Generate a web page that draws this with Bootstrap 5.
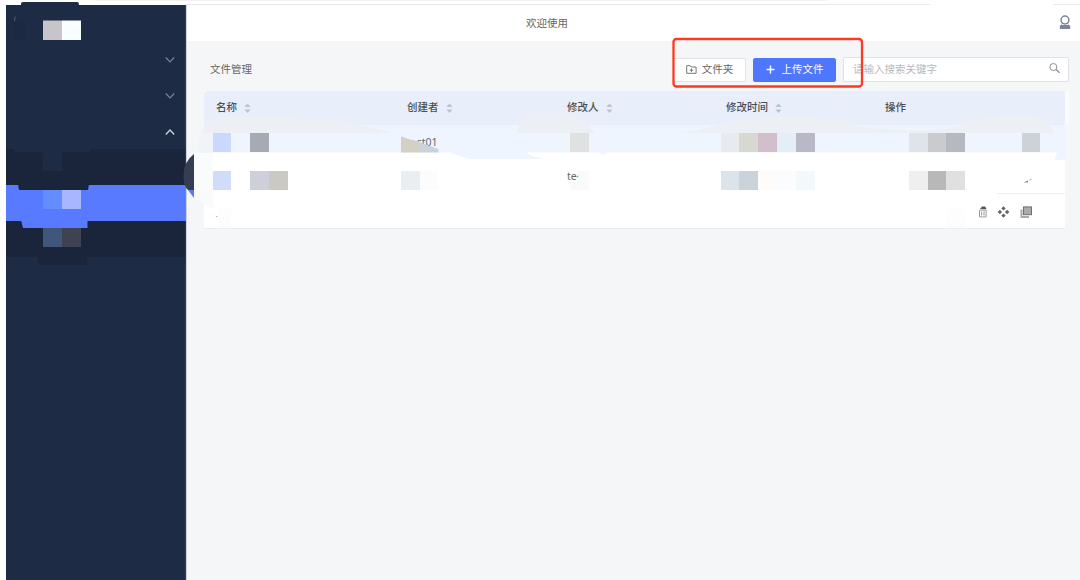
<!DOCTYPE html>
<html lang="zh-CN">
<head>
<meta charset="utf-8">
<title>文件管理</title>
<link href="https://cdn.jsdelivr.net/npm/bootstrap@5.3.0/dist/css/bootstrap.min.css" rel="stylesheet">
<style>
body{font:10.5px/1.5 "Noto Sans","Noto Sans CJK SC",sans-serif;color:#666;background:#fff;height:580px;overflow:hidden}
.app{height:575px;margin:5px 0 0 6px}
.side{width:180px;background:#1e2b44}
.side svg{display:block}
.group-head{height:36px;padding:1px 11px 0 0}
.sub{height:36px;background:#1a243a}
.sub.active{background:#587aff}
.brand-row{height:36px}
.content-area{background:#f4f6f8}
.top{height:36px;background:#fff;padding:1px 9px 0 0;box-shadow:0 -1px 0 #e8eaec}
.top-title{margin-left:340px}
.toolbar{height:50px;padding:7px 11px 0 24px}
.tool{height:24px;font-size:10.5px;line-height:1;border-radius:2px;padding:0;border:1px solid #e1e3e6}
.tool-folder{width:73px;background:#fff;color:#666;margin-right:7px;gap:5px}
.tool-upload{width:83px;background:#4e77fd;border-color:#4e77fd;color:#fff;margin-right:7px;gap:7px}
.tool-upload:hover{background:#4e77fd;color:#fff}
.search{width:226px;height:25px;background:#fff;border:1px solid #dfe1e5;border-radius:2px;padding:0 8px 0 9px}
.search input{border:0;padding:0 0 2px;font-size:10.5px;line-height:1;color:#666;min-height:0;height:22px;background:transparent}
.search input::placeholder{color:#b7b9bd;opacity:1}
.files{width:861px;margin-left:18px;background:#fff;border-bottom:1px solid #ebedef;height:138px}
.cols{display:grid;grid-template-columns:191px 160px 159px 159px 192px;align-items:center}
.cols>div{padding-left:12px}
.cols-head{height:34px;background:#e8effa;color:#4c4e53;font-weight:500;border-radius:3px 0 0 0}
.cols-head svg{margin-left:7px}
.r1{height:35px;background:#eef5ff}
.r2{height:34px;border-bottom:1px solid #eee;padding-top:1px}
.r3{height:34px;padding-top:1px}
.overlay{position:absolute;left:0;top:0;pointer-events:none}
</style>
<script src="https://cdn.jsdelivr.net/npm/bootstrap@5.3.0/dist/js/bootstrap.bundle.min.js"></script>
</head>
<body>
<div class="app d-flex">
  <nav class="side flex-shrink-0">
    <div class="brand-row"></div>
    <div class="group-head d-flex align-items-center justify-content-end"><svg width="10" height="8" fill="none" stroke="#7c869b" stroke-width="1.1"><path d="M.8 1.5 5 6 9.2 1.5"/></svg></div>
    <div class="group-head d-flex align-items-center justify-content-end"><svg width="10" height="8" fill="none" stroke="#7c869b" stroke-width="1.1"><path d="M.8 1.5 5 6 9.2 1.5"/></svg></div>
    <div class="group-head d-flex align-items-center justify-content-end"><svg width="10" height="8" fill="none" stroke="#ccd1d9" stroke-width="1.3"><path d="M.8 6.5 5 2 9.2 6.5"/></svg></div>
    <div class="sub"></div>
    <div class="sub active"></div>
    <div class="sub"></div>
  </nav>
  <main class="content-area flex-grow-1">
    <header class="top d-flex align-items-center">
      <span class="top-title">欢迎使用</span>
      <svg class="ms-auto mb-1" width="12" height="14" fill="none" stroke="#7d8497" stroke-width="1.5"><circle cx="6" cy="5" r="3.9"/><path d="M3.500 8 2.600 9.500M8.500 8 9.400 9.500" stroke-width="1"/><path d="M1.500 10h9l.7 1.500V14H.8v-2.500z" fill="#7d8497" stroke="none"/></svg>
    </header>
    <div class="toolbar d-flex align-items-center">
      <span class="me-auto">文件管理</span>
      <button class="btn tool tool-folder d-flex align-items-center justify-content-center"><svg width="11" height="10" fill="none" stroke="#777"><path d="M.7.700h3.500l1 1.300h4.900v6.300H.7zM3.700 5.200h3.600M5.500 3.500v3.400"/></svg><span>文件夹</span></button>
      <button class="btn tool tool-upload d-flex align-items-center justify-content-center"><svg width="9" height="9" stroke="#fff" stroke-width="1.4"><path d="M.5 4.500h8M4.500.5v8"/></svg><span>上传文件</span></button>
      <div class="search d-flex align-items-center"><input class="form-control shadow-none" placeholder="请输入搜索关键字"><svg class="flex-shrink-0 mb-1" width="11" height="11" fill="none" stroke="#8d8f93"><circle cx="4.400" cy="5" r="3.500"/><path d="m7 7.500 3.500 3.300" stroke-width="1.300"/></svg></div>
    </div>
    <section class="files">
      <div class="cols cols-head">
        <div>名称<svg width="7" height="10" fill="#bfc3ca"><path d="M.3 4 3.500.5 6.700 4zM.3 6.500h6.400L3.500 10z"/></svg></div>
        <div>创建者<svg width="7" height="10" fill="#bfc3ca"><path d="M.3 4 3.500.5 6.700 4zM.3 6.500h6.400L3.500 10z"/></svg></div>
        <div>修改人<svg width="7" height="10" fill="#bfc3ca"><path d="M.3 4 3.500.5 6.700 4zM.3 6.500h6.400L3.500 10z"/></svg></div>
        <div>修改时间<svg width="7" height="10" fill="#bfc3ca"><path d="M.3 4 3.500.5 6.700 4zM.3 6.500h6.400L3.500 10z"/></svg></div>
        <div>操作</div>
      </div>
      <div class="cols r1"><div></div><div>test01</div><div></div><div></div><div></div></div>
      <div class="cols r2"><div></div><div></div><div>te</div><div></div><div></div></div>
      <div class="r3 d-flex align-items-center justify-content-end">
        <svg width="55" height="14" fill="none" stroke="#777" style="margin-right:32px">
          <path d="M1.500 5.200h6.600v6.700H1.500zM3.700 6.500v4M6 6.500v4" stroke="#999"/><path d="M2 4 4 1.600h3.200l1.400 2.600z" fill="#555" stroke="none"/>
          <path d="m25.500 1.200 2.200 2.200-2.200 2.200-2.200-2.200zM25.500 8.400l2.200 2.200-2.200 2.200-2.200-2.200zM21.900 4.800 24.100 7l-2.200 2.200L19.700 7zM29.100 4.800 31.300 7 29.100 9.200 26.900 7z" fill="#666" stroke="none"/>
          <path d="M43.500 4.500v7.500h7.500" stroke="#aaa" stroke-width="2"/><rect x="45.500" y="1.900" width="8" height="7.800" fill="#aaa" stroke="#707070"/>
        </svg>
      </div>
    </section>
  </main>
</div>
<svg class="overlay" width="1080" height="580">
  <!-- window edge -->
  <path d="M95 0h732v1H95z" fill="#f1f2f3"/>
  <path d="M930 3h123v38H930z" fill="#fff"/>
  <path d="M21 5V3.500Q21 2 23 2H77Q79 2 79 5V7H21z" fill="#1e2b44"/>
  <path d="M186.300 5V580" stroke="#aeb4be" stroke-width=".7"/>
  <!-- sidebar masks -->
  <path d="M14.700 21.500V18l1-1.500" stroke="#66718a" fill="none" stroke-width=".7"/>
  <path d="M14 21h11v19H14z" fill="#1c2942"/>
  <path d="M43 20.500h19V40H43z" fill="#c7c5ca"/><path d="M62 20.500h19V40H62z" fill="#f8fdff"/>
  <path d="M14 148h78l-2 4.500H15z" fill="#1e2b44"/>
  <path d="M43 152h19v19H43z" fill="#1d2b45"/>
  <path d="M18 184h71l-1 6H19z" fill="#1a243a"/>
  <path d="M43 190h19v19H43z" fill="#648eff"/><path d="M62 190h19v19H62z" fill="#a8b5ff"/>
  <path d="M21 220h66.500v8H23z" fill="#587aff"/>
  <path d="M43 228h19v19H43z" fill="#40567a"/><path d="M62 228h19v19H62z" fill="#3e4252"/>
  <path d="M37 257h50v5q0 3-3 3H41q-4-1-4-8z" fill="#1a243a"/>
  <!-- wipe marks over the table -->
  <path d="M194 153H213V209Q202 203 194 197z" fill="#fafbfd"/>
  <path d="M200 133Q204 122 213 119V153H198z" fill="#f0f3f8"/>
  <path d="M194 154Q183 162 183.500 177 184 187 188 190H194z" fill="#343e50"/>
  <path d="M188 190h6v8z" fill="#587aff"/>
  <path d="M203 133Q205 122 217 117 300 114 345 122 370 127 393 133z" fill="#eceff3"/>
  <path d="M517 133q2-12 9-19h44q16 6 25 19z" fill="#eceff3"/>
  <path d="M681 133q20-3 45-10 30-7 62-7 30 0 58 5 20 6 58 8 28 0 48-2 20-10 45-11h38q15 5 19 17z" fill="#eceff3"/>
  <path d="M855 125H965Q945 130 925 130 880 130 855 126z" fill="#eef5ff"/>
  <path d="M213 152.500H450Q458 156 470 159H545Q532 157 526 152.500H600L602 155 608 152.500H1057L1054 161H213z" fill="#fff"/>
  <path d="M204 190h793v6H204z" fill="#fff"/>
  <path d="M197 190h16v18q-9-3-16-9z" fill="#f9fafc"/>
  <path d="M1065 91h4v34h-4z" fill="#fafbfc"/>
  <!-- mosaic blocks -->
  <g shape-rendering="crispEdges">
    <path d="M213 133h18v19h-18z" fill="#cad9fb"/><path d="M250 133h19v19h-19z" fill="#a6abb3"/>
    <path d="M213 171h18v19h-18z" fill="#d1dcfa"/><path d="M250 171h19v19h-19z" fill="#cdd0d9"/><path d="M269 171h19v19h-19z" fill="#cbc9c4"/>
    <path d="M401 171h19v19h-19z" fill="#e8eef1"/><path d="M420 171h18v19h-18z" fill="#fbfdfd"/>
    <path d="M570 133h19v19h-19z" fill="#e0e2e1"/>
    <path d="M577 171h12v19h-19v-8h7z" fill="#f8fbfa"/>
    <path d="M721 133h18v19h-18z" fill="#e7ebed"/><path d="M739 133h19v19h-19z" fill="#d8d8d2"/><path d="M758 133h19v19h-19z" fill="#d2bfcb"/><path d="M777 133h19v19h-19z" fill="#e3eef7"/><path d="M796 133h19v19h-19z" fill="#b9b8c6"/>
    <path d="M721 171h18v19h-18z" fill="#dce4eb"/><path d="M739 171h19v19h-19z" fill="#cbd2d8"/><path d="M758 171h19v19h-19z" fill="#fefcfa"/><path d="M777 171h19v19h-19z" fill="#fafcfe"/><path d="M796 171h19v19h-19z" fill="#f3f8fb"/>
    <path d="M909 133h19v19h-19z" fill="#dfe4eb"/><path d="M928 133h18v19h-18z" fill="#c9cbcf"/><path d="M946 133h19v19h-19z" fill="#b6bac0"/><path d="M1022 133h18v19h-18z" fill="#cdd2d6"/>
    <path d="M909 171h19v19h-19z" fill="#efefef"/><path d="M928 171h18v19h-18z" fill="#b8b8b8"/><path d="M946 171h19v19h-19z" fill="#e0e0e0"/>
    <path d="M218 209h13v19h-11z" fill="#fcfdff"/><path d="M947 209h18v19h-18z" fill="#fdfdfd"/>
  </g>
  <path d="M401 136.500 420 142V152.500H401z" fill="#d4d0c4"/><path d="M419 142 438.500 149V152.500H419z" fill="#c9d3d9"/>
  <path d="M405 136h11v5l-11-3z" fill="#eef5ff"/>
  <path d="M216 216.500h1.500" stroke="#aab5ff"/>
  <path d="M1023.500 182.500 1028 180.500V182.500zM1028.500 180.500 1032 178.500 1031 180z" fill="#888"/>
  <path d="M576.500 177l2-1" stroke="#777" stroke-width=".8"/>
  <rect x="673.500" y="39" width="188.500" height="47.500" rx="3" fill="none" stroke="#fd3a21" stroke-width="2.300"/>
</svg>
</body>
</html>
